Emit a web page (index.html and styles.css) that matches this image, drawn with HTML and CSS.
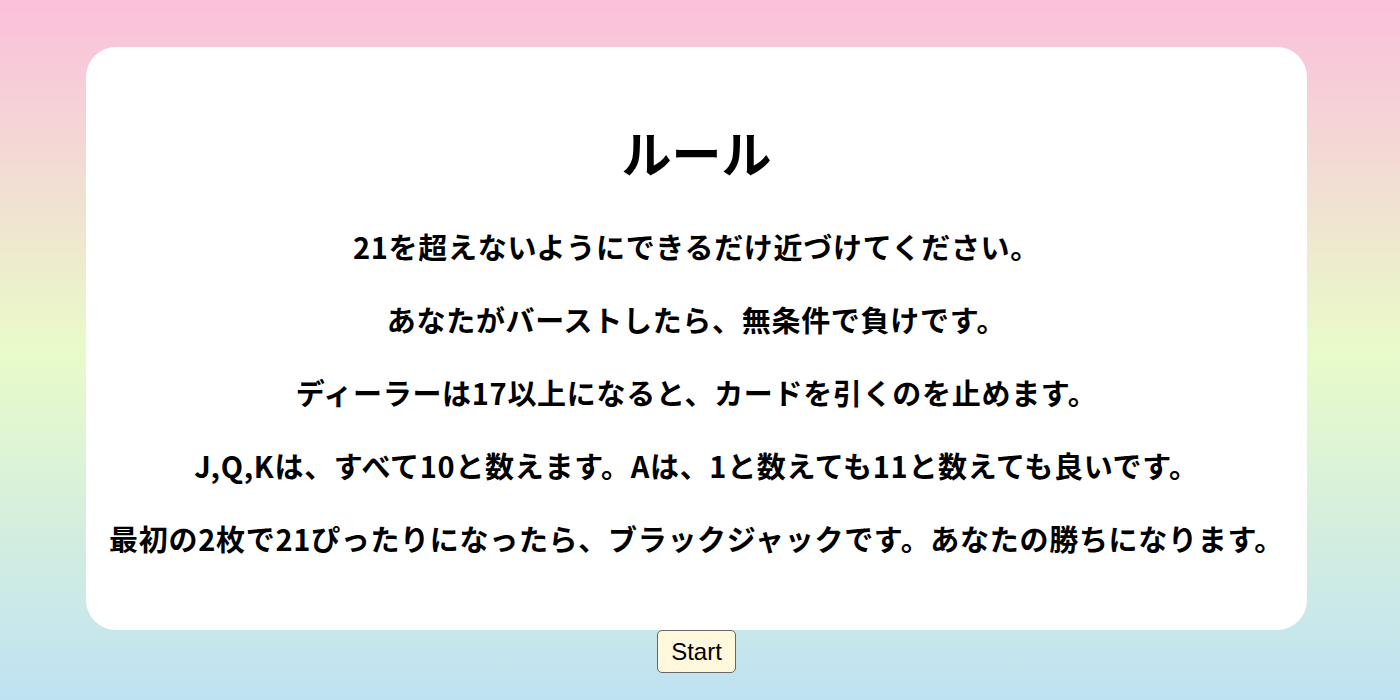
FILE: index.html
```html
<!DOCTYPE html>
<html lang="ja">
<head>
<meta charset="utf-8">
<title>ルール</title>
<link rel="stylesheet" href="styles.css">
</head>
<body>
<div class="page">
  <section class="card">
    <h1 class="title">ルール</h1>
    <p class="rule">21を超えないようにできるだけ近づけてください。</p>
    <p class="rule">あなたがバーストしたら、無条件で負けです。</p>
    <p class="rule">ディーラーは17以上になると、カードを引くのを止めます。</p>
    <p class="rule">J,Q,Kは、すべて10と数えます。Aは、1と数えても11と数えても良いです。</p>
    <p class="rule">最初の2枚で21ぴったりになったら、ブラックジャックです。あなたの勝ちになります。</p>
  </section>
  <div class="actions">
    <button class="start">Start</button>
  </div>
</div>
</body>
</html>
```
FILE: styles.css
```css
html, body {
  margin: 0;
  padding: 0;
}
body {
  min-height: 700px;
  background: linear-gradient(to bottom, #fbbfdc 0%, #e9fbc9 50%, #bfe2f3 100%);
  font-family: "Noto Sans CJK JP", "Noto Sans", sans-serif;
  color: #000;
}
.page {
  padding: 47px 93px 0 86px;
}
.card {
  background: #fff;
  border-radius: 30px;
  padding: 69px 10px 72px;
  text-align: center;
}
.title {
  margin: 0 0 40px;
  font-size: 50px;
  line-height: 70px;
  font-weight: 700;
}
.rule {
  margin: 0 0 33px;
  font-size: 29px;
  line-height: 40px;
  font-weight: 700;
  letter-spacing: 0.7px;
}
.rule:last-child {
  margin-bottom: 0;
}
.actions {
  display: flex;
  justify-content: center;
}
.start {
  font-family: "Liberation Sans", Arial, sans-serif;
  font-size: 24px;
  line-height: 25px;
  padding: 8px 13px;
  background: #fff8dc;
  border: 1px solid #666;
  border-radius: 5px;
  color: #000;
}
```
